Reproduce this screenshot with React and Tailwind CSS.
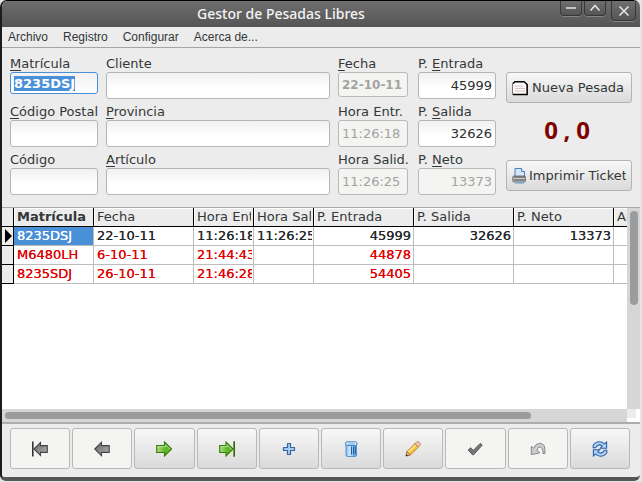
import React, { useEffect, useRef } from 'react';

const fieldBase = 'block w-full rounded-[3px] border px-[3px] leading-4 outline-none';
const editable =
  'border-[#b5b5b5] bg-linear-to-b from-[#f1f1f1] to-white to-60% text-[#2b2f30]';
const locked = 'border-[#b9b9b9] bg-[#f4f4f2] text-[#a3a3a1]';

function Label({ id, text, mnemonic }) {
  return (
    <label htmlFor={id} className="block h-[15px] text-[13px] leading-[13px] whitespace-nowrap">
      {mnemonic ? (
        <>
          <span className="underline underline-offset-2">{mnemonic}</span>
          {text}
        </>
      ) : (
        text
      )}
    </label>
  );
}

function Row({ id, text, mnemonic, value = '', disabled, size = 'h-[27px] text-[13px]', extra = '' }) {
  return (
    <div className="h-[42px]">
      <Label id={id} text={text} mnemonic={mnemonic} />
      <input
        id={id}
        type="text"
        defaultValue={value}
        disabled={disabled}
        className={`${fieldBase} ${disabled ? locked : editable} ${size} ${extra}`}
      />
    </div>
  );
}

function WindowButton({ label, size, children }) {
  return (
    <button
      type="button"
      aria-label={label}
      className={`flex items-center justify-center rounded-b-[4px] border border-t-0 border-[#363636] bg-linear-to-b from-[#6f6f6f] to-[#555555] shadow-[0_1px_0_#858585] ${size}`}
    >
      <svg width="12" height="12" viewBox="0 0 12 12" fill="none" stroke="#e4e4e4" strokeWidth="1.6">
        {children}
      </svg>
    </button>
  );
}

const arrowLeft = 'M0.8 8 L7.5 1.3 V4.6 H15.2 V11.4 H7.5 V14.7 Z';
const arrowRight = 'M15.5 8 L8.5 1 V4.5 H0.7 V11.5 H8.5 V15 Z';

function NavGradients() {
  return (
    <svg width="0" height="0" className="absolute" aria-hidden="true">
      <defs>
        <linearGradient id="gray" x1="0" y1="0" x2="1" y2="1">
          <stop offset="0" stopColor="#666" />
          <stop offset="1" stopColor="#b4b4b4" />
        </linearGradient>
        <linearGradient id="green" x1="0" y1="0" x2="1" y2="0">
          <stop offset="0" stopColor="#b2dc8c" />
          <stop offset="0.6" stopColor="#58b51c" />
          <stop offset="1" stopColor="#73c83c" />
        </linearGradient>
        <linearGradient id="blue" x1="0" y1="0" x2="1" y2="0">
          <stop offset="0" stopColor="#7db8ee" />
          <stop offset="0.35" stopColor="#cfe7fe" />
          <stop offset="1" stopColor="#4b94dc" />
        </linearGradient>
      </defs>
    </svg>
  );
}

const navItems = [
  {
    label: 'Primero',
    disabled: true,
    icon: (
      <>
        <path d="M0.8 0.5 V15.5" stroke="#333" strokeWidth="1.6" />
        <path d="M2 8 L8.5 1.5 V4.6 H15.3 V11.4 H8.5 V14.5 Z" fill="url(#gray)" stroke="#444" strokeWidth="1.1" />
      </>
    ),
  },
  {
    label: 'Anterior',
    disabled: true,
    icon: <path d={arrowLeft} fill="url(#gray)" stroke="#444" strokeWidth="1.1" />,
  },
  {
    label: 'Siguiente',
    icon: (
      <>
        <path d={arrowRight} fill="url(#green)" stroke="#377a08" strokeWidth="1.1" />
        <path d="M1.9 5.7 H9.6 V3.8 L13.8 8" fill="none" stroke="#c5e8a6" strokeWidth="0.8" />
      </>
    ),
  },
  {
    label: 'Último',
    icon: (
      <>
        <path d="M14 8 L7 1 V4.5 H0.7 V11.5 H7 V15 Z" fill="url(#green)" stroke="#377a08" strokeWidth="1.1" />
        <path d="M1.9 5.7 H8 V3.8 L12.3 8" fill="none" stroke="#c5e8a6" strokeWidth="0.8" />
        <path d="M15.2 0.2 V15.8" stroke="#2f6b04" strokeWidth="1.7" />
      </>
    ),
  },
  {
    label: 'Añadir',
    icon: (
      <path
        d="M6.5 2.5 H9.5 V6.5 H13.5 V9.5 H9.5 V13.5 H6.5 V9.5 H2.5 V6.5 H6.5 Z"
        fill="#a9cdf2"
        stroke="#3465a4"
        strokeWidth="1.2"
        strokeLinejoin="round"
      />
    ),
  },
  {
    label: 'Borrar',
    icon: (
      <>
        <path d="M3 3.5 H13.5 V14 Q13.5 15.5 12 15.5 H4.5 Q3 15.5 3 14 Z" fill="url(#blue)" stroke="#5a93cc" />
        <path d="M8.5 5.5 V13.5 M10.5 5.5 V13.5 M12.3 5.5 V13" stroke="#1d5fa8" strokeWidth="1" />
        <rect x="2.5" y="0.8" width="11.5" height="3.7" rx="1.4" fill="#d8ecfd" stroke="#4583c2" />
        <path d="M4.5 3 H12" stroke="#5c9bd8" strokeWidth="0.8" />
      </>
    ),
  },
  {
    label: 'Editar',
    icon: (
      <>
        <path d="M1 15 L2 10.5 L5.4 14 Z" fill="#e8caa0" stroke="#8a5a1c" strokeWidth="0.9" />
        <path d="M2 10.5 L10 2.6 L13.4 6 L5.4 14 Z" fill="#f6c544" stroke="#b97712" strokeWidth="0.9" />
        <path d="M3.4 11 L11 3.6" stroke="#ffeaa0" strokeWidth="1.3" />
        <path d="M10 2.6 L11.6 1.1 Q12.8 0.2 14.2 1.3 L15 2.2 Q15.7 3.4 14.8 4.5 L13.4 6 Z" fill="#eccbb0" stroke="#b97955" strokeWidth="0.9" />
        <path d="M0.8 15.2 L1.4 13 L3 14.6 Z" fill="#3c2a12" />
      </>
    ),
  },
  {
    label: 'Aceptar',
    disabled: true,
    icon: (
      <path
        d="M1.2 9 L3.6 6.8 L6.3 9.4 L13.2 2.4 L15.2 4.1 L6.6 13.8 H5.6 Z"
        fill="#777"
        stroke="#4b4b4b"
        strokeWidth="0.9"
        strokeLinejoin="round"
      />
    ),
  },
  {
    label: 'Cancelar',
    disabled: true,
    icon: (
      <path
        d="M1.3 5.5 L3.6 7.2 Q5.6 2.6 9.6 2.3 Q14.8 2.6 14.9 8.3 V12.6 H13 Q13.2 9 12.1 7.3 Q10.8 5.4 8.7 6.3 Q7.4 7 7 9.3 L9.8 11.8 L1.3 13.6 Z"
        fill="#cfcfcf"
        stroke="#858585"
        strokeLinejoin="round"
      />
    ),
  },
  {
    label: 'Refrescar',
    icon: (
      <g fill="#b3d3f3" stroke="#2b62ad" strokeWidth="1.1" strokeLinejoin="miter">
        <path d="M1.2 4.2 Q3.6 0.7 7.4 0.7 Q10.4 0.7 12.4 3 L14.6 1 V7.3 H8.2 L10.3 5.1 Q8.9 3.8 7.2 3.9 Q4.9 4.1 3.6 6.7 H1.2 Z" />
        <path d="M14.8 11.8 Q12.4 15.3 8.6 15.3 Q5.6 15.3 3.6 13 L1.4 15 V8.7 H7.8 L5.7 10.9 Q7.1 12.2 8.8 12.1 Q11.1 11.9 12.4 9.3 H14.8 Z" />
      </g>
    ),
  },
];

const columns = ['Matrícula', 'Fecha', 'Hora Entr.', 'Hora Sal.', 'P. Entrada', 'P. Salida', 'P. Neto', 'Artículo'];

const records = [
  { current: true, cells: ['8235DSJ', '22-10-11', '11:26:18', '11:26:25', '45999', '32626', '13373', ''] },
  { cells: ['M6480LH', '6-10-11', '21:44:43', '', '44878', '', '', ''] },
  { cells: ['8235SDJ', '26-10-11', '21:46:28', '', '54405', '', '', ''] },
];

function RecordsTable() {
  return (
    <table className="w-[712px] table-fixed border-separate border-spacing-0 text-[13px] leading-[18px]">
      <colgroup>
        <col className="w-3" />
        <col className="w-[80px]" />
        <col className="w-[100px]" />
        <col className="w-[60px]" />
        <col className="w-[60px]" />
        <col className="w-[100px]" />
        <col className="w-[100px]" />
        <col className="w-[100px]" />
        <col className="w-[100px]" />
      </colgroup>
      <thead>
        <tr>
          <td className="border-r border-b border-black bg-[#ececec] p-0" />
          {columns.map((name, i) => (
            <th
              key={name}
              scope="col"
              className={`border-r border-b border-black bg-[#ececec] p-0 pr-[2px] pl-[3px] text-left text-[#333738] shadow-[inset_1px_1px_0_#fff] ${
                i === 0 ? 'font-bold' : 'font-normal'
              }`}
            >
              <div className="overflow-hidden whitespace-nowrap">{name}</div>
            </th>
          ))}
        </tr>
      </thead>
      <tbody>
        {records.map((record) => (
          <tr key={record.cells[0]} className={record.current ? 'text-[#24292b]' : 'text-[#e00000]'}>
            <td className="border-r border-b border-black bg-[#ececec] p-0">
              {record.current && (
                <svg width="11" height="14" viewBox="0 0 11 14" className="block">
                  <path d="M3 0 L10 7 L3 14 Z" fill="#000" />
                </svg>
              )}
            </td>
            {record.cells.map((cell, i) => (
              <td
                key={i}
                className={`border-r border-b border-[#bdbdbd] p-0 pl-[3px] [text-shadow:0_0_0_currentColor] ${
                  i > 3 ? 'pr-[2px] text-right' : 'pr-px text-left'
                } ${record.current && i === 0 ? 'bg-[#4a90d9] text-white' : ''}`}
              >
                <div className="h-[18px] overflow-hidden whitespace-nowrap">{cell}</div>
              </td>
            ))}
          </tr>
        ))}
      </tbody>
    </table>
  );
}

const actionButton =
  'flex h-[31px] w-full items-center overflow-hidden rounded-[3px] border border-[#b4b4b4] bg-linear-to-b from-[#f8f8f8] to-[#dadada] px-[5px] text-[13px] whitespace-nowrap';

export default function App() {
  const plate = useRef(null);

  useEffect(() => {
    plate.current.focus();
    plate.current.select();
  }, []);

  return (
    <div className="h-screen overflow-hidden bg-[#e4e4e4] pr-[2px] pb-px font-['DejaVu_Sans',sans-serif] text-[#333738]">
      <NavGradients />
      <div className="flex h-full flex-col overflow-hidden rounded-t-[7px] rounded-b-[6px] border-t border-b-4 border-l-2 border-t-black border-b-[#555555] border-l-[#1c1c1c] bg-[#ececec]">
        <header className="flex h-[26px] shrink-0 items-start bg-linear-to-b from-[#6e6e6e] to-[#555555] pr-1">
          <h1 className="flex-1 text-center font-['Noto_Sans','Open_Sans',sans-serif] text-[14px] leading-[25px] font-medium text-[#f4f4f4]">
            Gestor de Pesadas Libres
          </h1>
          <div className="flex items-start gap-[2px]">
            <WindowButton label="Minimizar" size="h-[15px] w-[22px]">
              <path d="M1 6 H11" />
            </WindowButton>
            <WindowButton label="Maximizar" size="h-[15px] w-[22px]">
              <path d="M1.5 8.5 L6 3.5 L10.5 8.5" />
            </WindowButton>
            <div className="pl-[3px]">
              <WindowButton label="Cerrar" size="h-5 w-[25px]">
                <path d="M1.5 1.5 L10.5 10.5 M10.5 1.5 L1.5 10.5" />
              </WindowButton>
            </div>
          </div>
        </header>

        <nav className="flex h-[21px] shrink-0 items-center gap-[15px] border-b border-[#a5a5a5] px-[6px] font-['Liberation_Sans',Arial,sans-serif] text-[12px]">
          <button type="button">Archivo</button>
          <button type="button">Registro</button>
          <button type="button">Configurar</button>
          <button type="button">Acerca de...</button>
        </nav>

        <form className="flex h-[159px] shrink-0 gap-2 pt-[9px] pr-2 pl-2">
          <div className="flex w-[88px] flex-col gap-[6px]">
            <div className="h-[42px]">
              <Label id="matricula" mnemonic="M" text="atrícula" />
              <input
                ref={plate}
                id="matricula"
                type="text"
                defaultValue="8235DSJ"
                className="block h-[22px] w-full rounded-[3px] border border-[#4a90d9] bg-linear-to-b from-[#f1f1f1] to-white px-[3px] text-[13px] leading-4 font-bold outline-none selection:bg-[#4a90d9] selection:text-white"
              />
            </div>
            <Row id="cp" mnemonic="C" text="ódigo Postal" />
            <Row id="codigo" text="Código" />
          </div>
          <div className="flex flex-1 flex-col gap-[6px]">
            <Row id="cliente" text="Cliente" />
            <Row id="provincia" mnemonic="P" text="rovincia" />
            <Row id="articulo" mnemonic="A" text="rtículo" />
          </div>
          <div className="flex w-[70px] flex-col gap-[6px]">
            <Row id="fecha" mnemonic="F" text="echa" value="22-10-11" disabled size="h-[25px] text-[12px]" extra="font-bold" />
            <Row id="entr" text="Hora Entr." value="11:26:18" disabled />
            <Row id="salid" text="Hora Salid." value="11:26:25" disabled />
          </div>
          <div className="flex w-[80px] flex-col gap-[6px] pl-[2px]">
            <Row id="pentrada" text={<>P. <span className="underline underline-offset-2">E</span>ntrada</>} value="45999" extra="text-right" />
            <Row id="psalida" text={<>P. <span className="underline underline-offset-2">S</span>alida</>} value="32626" extra="text-right" />
            <Row id="pneto" text={<>P. <span className="underline underline-offset-2">N</span>eto</>} value="13373" disabled extra="text-right" />
          </div>
          <div className="flex h-[134px] w-[128px] flex-col justify-between pt-[15px] pl-[2px]">
            <button type="button" className={`${actionButton} gap-1`}>
              <svg width="16" height="16" viewBox="0 0 16 16" className="shrink-0">
                <path d="M0.5 3.5 L2.5 1.5 H12 L15 4.5 V14.5 H0.5 Z" fill="#fffafa" stroke="#777" />
                <path d="M1 3.5 L3 1.7 H12 L15.2 4.5 V14.5 H1" fill="none" stroke="#000" strokeWidth="1.4" />
                <path d="M3 6 H11 M3 8.5 H13 M3 11 H13" stroke="#d9c5c8" />
              </svg>
              Nueva Pesada
            </button>
            <output className="pr-1 pb-1 text-center font-['Noto_Sans',sans-serif] text-[24px] leading-[30px] font-bold text-[#800000]">
              <span className="inline-block w-4">0</span>
              <span className="inline-block w-4">,</span>
              <span className="inline-block w-4">0</span>
            </output>
            <button type="button" className={actionButton}>
              <span className="flex items-center gap-px overflow-hidden">
                <svg width="16" height="16" viewBox="0 0 16 16" className="shrink-0">
                  <path d="M3 0.5 H9.5 L12.5 3.5 V9 H3 Z" fill="#d3e6fb" stroke="#4681c4" />
                  <path d="M9.5 0.5 V3.5 H12.5" fill="#fff" stroke="#4681c4" />
                  <rect x="0.8" y="8" width="12.6" height="6" rx="1" fill="#c8c8c8" stroke="#777" />
                  <path d="M1.5 9 H13 M1.5 12 H13" stroke="#444" />
                  <path d="M3 15 H12" stroke="#5d9be0" strokeWidth="1.2" />
                </svg>
                Imprimir Ticket
              </span>
            </button>
          </div>
        </form>

        <main className="flex min-h-0 flex-1 flex-col border-t border-b-2 border-t-[#a8a8a8] border-b-[#adadad] bg-white">
          <div className="flex min-h-0 flex-1">
            <div className="min-w-0 flex-1 overflow-hidden">
              <RecordsTable />
            </div>
            <div className="w-[13px] bg-[#d6d6d6] px-[3px] pt-[3px]">
              <div className="h-[94px] w-2 rounded-full bg-[#9b9c9e]" />
            </div>
          </div>
          <div className="flex h-[13px] shrink-0">
            <div className="flex-1 bg-[#d6d6d6] px-[3px] pt-[3px]">
              <div className="h-[7px] w-[85%] rounded-full bg-[#9b9c9e]" />
            </div>
            <div className="w-[13px]">
              <div className="h-[9px] w-[9px] bg-[#ececec]" />
            </div>
          </div>
        </main>

        <footer className="grid shrink-0 grid-cols-10 gap-[2px] pt-[4px] pr-[10px] pb-2 pl-2">
          {navItems.map((item) => (
            <button
              key={item.label}
              type="button"
              aria-label={item.label}
              disabled={item.disabled}
              className={`flex h-[41px] items-center justify-center rounded-[3px] border border-[#b8b8b8] ${
                item.disabled ? 'bg-[#f4f4f2]' : 'bg-linear-to-b from-[#f8f8f8] to-[#dadada]'
              }`}
            >
              <svg width="16" height="16" viewBox="0 0 16 16">
                {item.icon}
              </svg>
            </button>
          ))}
        </footer>
      </div>
    </div>
  );
}
